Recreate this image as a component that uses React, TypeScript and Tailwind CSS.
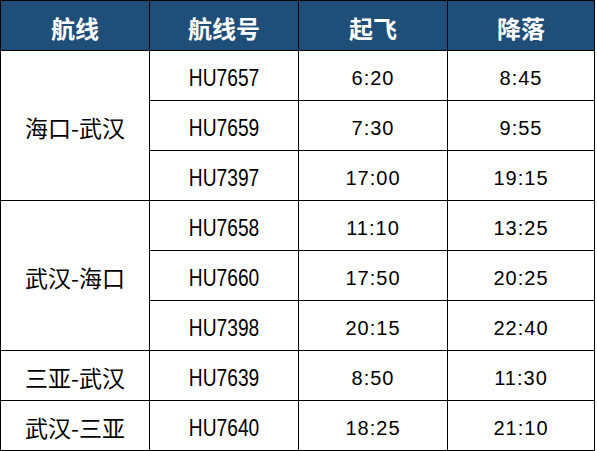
import React from "react";

const headers = ["航线", "航线号", "起飞", "降落"];

type Group = { route: string; span: string; flights: [string, string, string][] };

const groups: Group[] = [
  { route: "海口-武汉", span: "row-span-3", flights: [["HU7657", "6:20", "8:45"], ["HU7659", "7:30", "9:55"], ["HU7397", "17:00", "19:15"]] },
  { route: "武汉-海口", span: "row-span-3", flights: [["HU7658", "11:10", "13:25"], ["HU7660", "17:50", "20:25"], ["HU7398", "20:15", "22:40"]] },
  { route: "三亚-武汉", span: "row-span-1", flights: [["HU7639", "8:50", "11:30"]] },
  { route: "武汉-三亚", span: "row-span-1", flights: [["HU7640", "18:25", "21:10"]] },
];

const cell = "bg-white flex items-center justify-center text-black";
const timeCls = `${cell} text-[20px] tracking-[1px] pt-[4px] font-['Liberation_Sans',Arial,sans-serif]`;

export default function App() {
  return (
    <div className="w-[597px] h-[451px] bg-white">
      <div className="w-[595px] h-[451px] bg-black p-px grid grid-cols-[148px_148px_148px_146px] grid-rows-[repeat(9,49px)] gap-px">
        {headers.map((h) => (
          <div
            key={h}
            className="bg-[#1f4e79] text-white font-bold text-[24px] flex items-center justify-center pt-[5px] font-['Noto_Sans_CJK_SC',sans-serif]"
          >
            {h}
          </div>
        ))}
        {groups.map((g) => (
          <React.Fragment key={g.route}>
            <div className={`${cell} ${g.span} text-[23px] pt-[3px] font-['Noto_Sans_CJK_SC',sans-serif]`}>{g.route}</div>
            {g.flights.map((f) => (
              <React.Fragment key={f[0]}>
                <div className={`${cell} text-[24px] pt-[4px] font-['Liberation_Sans',Arial,sans-serif]`}>
                  <span className="inline-block scale-x-[0.8]">{f[0]}</span>
                </div>
                <div className={timeCls}>{f[1]}</div>
                <div className={timeCls}>{f[2]}</div>
              </React.Fragment>
            ))}
          </React.Fragment>
        ))}
      </div>
    </div>
  );
}
